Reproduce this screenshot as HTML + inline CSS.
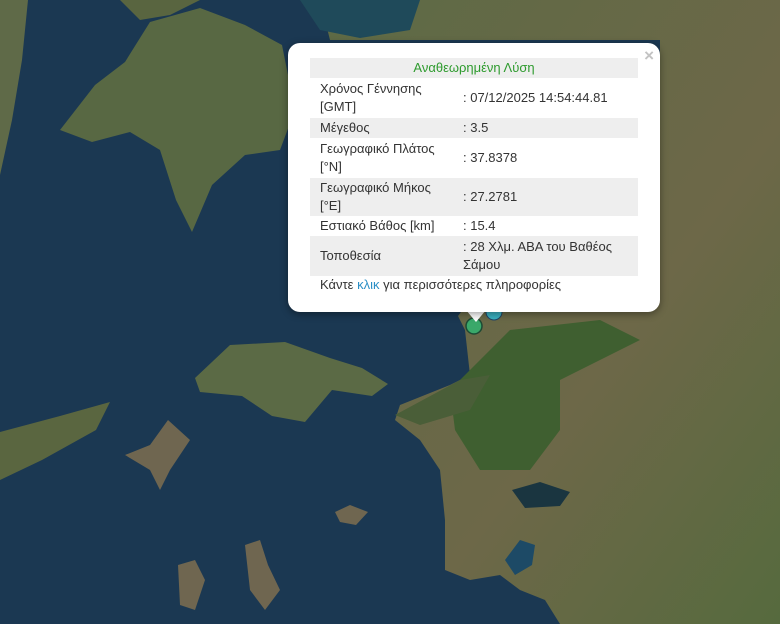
<!DOCTYPE html>
<html><head><meta charset="utf-8"><style>
body{margin:0;width:780px;height:624px;overflow:hidden;background:#1c3a54;font-family:"Liberation Sans",sans-serif}
svg{position:absolute;left:0;top:0}
.pop{position:absolute;left:288px;top:43px;width:372px;height:269px;background:#fff;border-radius:12px;box-shadow:0 2px 8px rgba(0,0,0,.4)}
.tip{position:absolute;left:466px;top:310px;width:0;height:0;border-left:10px solid transparent;border-right:10px solid transparent;border-top:12px solid #fff}
.x{position:absolute;right:6px;top:3px;color:#c3c3c3;font-size:17px;font-weight:bold}
table{position:absolute;left:22px;top:15px;width:328px;border-collapse:collapse;font-size:13px;color:#333;table-layout:fixed}
td{padding:0 0 0 10px;vertical-align:middle;line-height:18px;white-space:nowrap}
tr.g{background:#eee}
td.v{padding-left:0}
.h td{color:#2e9b2e;text-align:center;height:20px;padding:0}
.f{position:absolute;left:32px;top:234px;font-size:13px;color:#333}
.f span{color:#2b8fc6}
</style></head><body>
<svg width="780" height="624" viewBox="0 0 780 624">
<defs>
<linearGradient id="l" x1="0" y1="0" x2="1" y2="1"><stop offset="0" stop-color="#5d6a45"/><stop offset=".6" stop-color="#6d6848"/><stop offset="1" stop-color="#566a3e"/></linearGradient>
</defs>
<rect width="780" height="624" fill="#1b3852"/>
<polygon fill="#5f6a48" points="0,0 28,0 22,60 12,120 0,175"/>
<polygon fill="#586843" points="60,130 95,85 125,62 150,22 200,8 245,25 282,45 295,110 280,150 245,155 212,185 192,232 176,200 160,150 130,132 92,142"/>
<polygon fill="#596540" points="120,0 140,20 170,15 200,0"/>
<polygon fill="url(#l)" points="320,0 780,0 780,624 560,624 545,600 520,590 500,575 470,580 445,570 445,520 440,470 420,440 395,420 400,405 450,385 470,375 465,330 458,316 470,300 660,300 660,40 330,40"/>
<polygon fill="#1f4a5a" points="300,0 420,0 410,30 360,38 320,30"/>
<polygon fill="#3f5f30" points="450,390 510,330 600,320 640,340 600,360 560,380 560,430 530,470 480,470 455,430"/>
<polygon fill="#4a5e38" points="395,415 460,380 490,375 470,410 420,425"/>
<polygon fill="#1a3540" points="512,490 540,482 570,492 560,506 525,508"/>
<polygon fill="#1d4a66" points="505,560 520,540 535,545 532,565 515,575"/>
<polygon fill="#5b6a45" points="195,378 230,345 285,342 330,358 362,368 388,384 372,396 332,390 305,422 272,416 242,396 200,392"/>
<polygon fill="#5a6640" points="0,432 60,416 110,402 96,430 42,460 0,480"/>
<polygon fill="#6f6650" points="125,455 150,445 168,420 190,440 170,470 160,490 150,470"/>
<polygon fill="#6f6650" points="335,512 350,505 368,512 356,525 340,522"/>
<polygon fill="#6f6650" points="178,565 195,560 205,580 195,610 180,605"/>
<polygon fill="#6f6650" points="245,545 260,540 268,565 280,590 265,610 250,590"/>
<circle cx="494" cy="312" r="8" fill="#3bb0c0" stroke="#246" stroke-width="1"/>
<circle cx="474" cy="326" r="8" fill="#3aa86a" stroke="#1d4a34" stroke-width="1.5"/>
</svg>
<div class="tip"></div>
<div class="pop">
<div class="x">×</div>
<table>
<colgroup><col style="width:153px"><col></colgroup>
<tr class="g h"><td colspan="2">Αναθεωρημένη Λύση</td></tr>
<tr style="height:40px"><td>Χρόνος Γέννησης<br>[GMT]</td><td class="v">: 07/12/2025 14:54:44.81</td></tr>
<tr class="g" style="height:20px"><td>Μέγεθος</td><td class="v">: 3.5</td></tr>
<tr style="height:40px"><td>Γεωγραφικό Πλάτος<br>[°N]</td><td class="v">: 37.8378</td></tr>
<tr class="g" style="height:38px"><td>Γεωγραφικό Μήκος<br>[°E]</td><td class="v">: 27.2781</td></tr>
<tr style="height:20px"><td>Εστιακό Βάθος [km]</td><td class="v">: 15.4</td></tr>
<tr class="g" style="height:40px"><td>Τοποθεσία</td><td class="v">: 28 Χλμ. ΑΒΑ του Βαθέος<br>Σάμου</td></tr>
</table>
<div class="f">Κάντε <span>κλικ</span> για περισσότερες πληροφορίες</div>
</div>
</body></html>
